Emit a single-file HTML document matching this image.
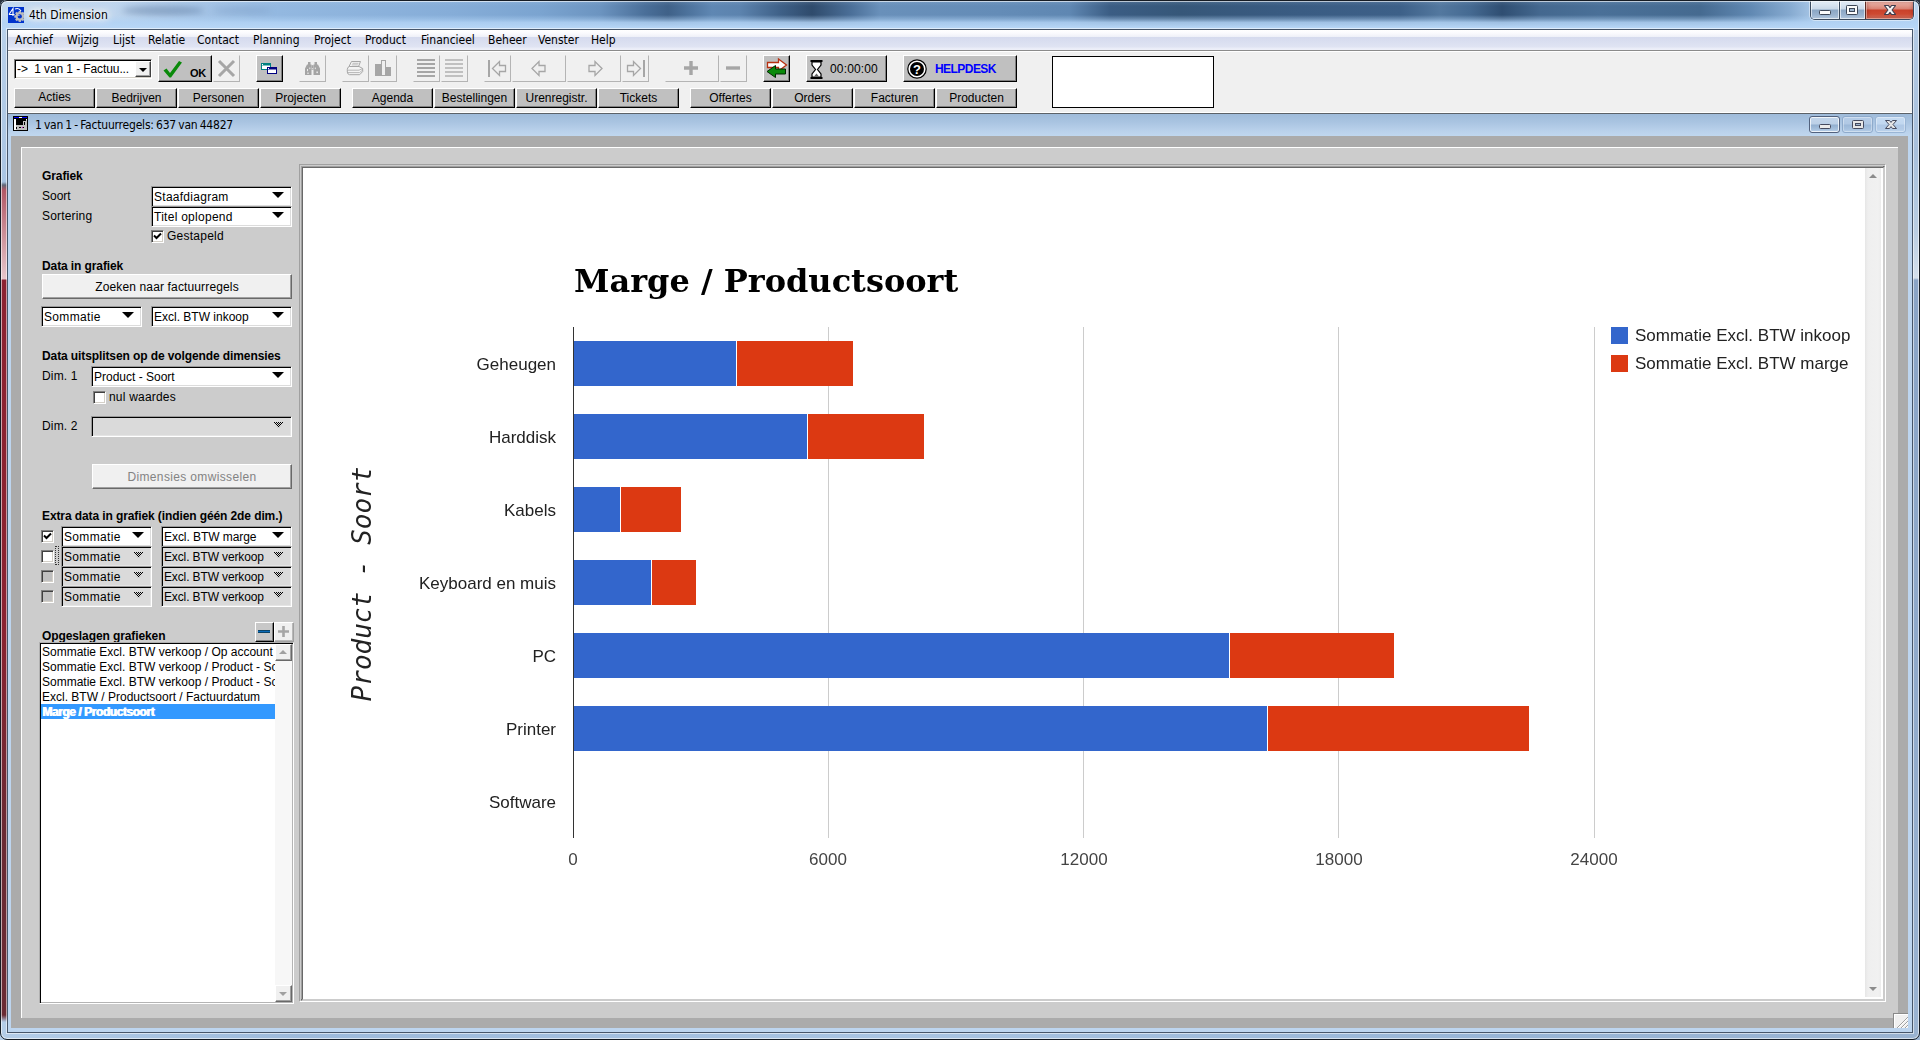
<!DOCTYPE html>
<html lang="nl">
<head>
<meta charset="utf-8">
<title>4th Dimension</title>
<style>
*{box-sizing:border-box;margin:0;padding:0}
html,body{width:1920px;height:1040px;overflow:hidden;background:#2b3440;}
body{position:relative;font-family:"Liberation Sans",sans-serif;font-size:12px;color:#000;line-height:14px;}
.a{position:absolute;white-space:nowrap}
.b{font-weight:bold;letter-spacing:-0.1px}
svg{position:absolute;overflow:visible}
/* ---------- outer aero frame ---------- */
#frame{position:absolute;left:0;top:0;width:1920px;height:1040px;border-radius:7px 7px 7px 7px;overflow:hidden;
  background:#b4cde9;}
#titlebar{position:absolute;left:0;top:0;width:1920px;height:30px;overflow:hidden;
  background:linear-gradient(90deg,#c4d9ee 0,#c0d6ee 110px,#a5c4e6 200px,#93b8e0 280px,#86add8 450px,#7ba4d0 540px,#6c94c0 600px,#4a6f99 645px,#3f6188 668px,#4e749e 690px,#5f87b3 712px,#5c83ae 740px,#3f6188 780px,#2f4b6c 812px,#4a6e97 850px,#6990ba 880px,#648cb7 1000px,#5f87b2 1070px,#3b5d84 1110px,#365779 1180px,#3a5c83 1300px,#3d6088 1400px,#53789f 1440px,#456a92 1470px,#2f4e72 1502px,#44688f 1540px,#4a7098 1600px,#456a90 1700px,#6088b2 1750px,#86aad0 1790px,#a9c8e8 1815px,#b9d3ee 1920px);}
#titlebar .shade{position:absolute;left:0;top:0;width:1920px;height:30px;
  background:linear-gradient(180deg,rgba(200,222,245,.25) 0px,rgba(200,222,245,.08) 3px,rgba(190,215,240,0) 6px,rgba(176,210,244,0) 15px,rgba(176,210,244,.4) 19px,rgba(178,211,245,.85) 22.500px,rgba(183,214,246,1) 28px);}
.blob{position:absolute;filter:blur(3px);border-radius:50%}
.seg{font-family:"DejaVu Sans Condensed","DejaVu Sans","Liberation Sans",sans-serif;font-size:12px;line-height:15px}
#ttext{left:29px;top:8px;text-shadow:0 0 5px #fff,0 0 8px #fff,0 0 12px #fff,0 0 12px #fff;}
#client{position:absolute;left:8px;top:30px;width:1904px;height:1002px;background:#f0f0f0;}
/* ---------- menu ---------- */
#menubar{position:absolute;left:8px;top:30px;width:1904px;height:21px;
  background:linear-gradient(180deg,#ffffff 0px,#fbfbfe 3px,#eef0f8 7px,#d6dbee 7.500px,#dadff0 12px,#e0e4f3 17px,#e9ecf7 18px,#eef0f9 20px);border-bottom:1px solid #8b8b8b;}
/* ---------- classic buttons ---------- */
.btn{position:absolute;background:#c0c0c0;border:1px solid;border-color:#fff #000 #000 #fff;box-shadow:inset -1px -1px 0 #808080;text-align:center;white-space:nowrap}
.dbtn{position:absolute;background:#f0f0f0;border:1px solid;border-color:#f0f0f0 #b4b4b4 #b4b4b4 #f0f0f0;}
.nav{height:20px;top:88px;width:81px;line-height:19px}
/* sunken combo */
.cb{position:absolute;background:#fff;border:1px solid;border-color:#999 #fff #fff #999;box-shadow:inset 1px 1px 0 #000,inset -1px -1px 0 #dcdcdc;height:21px;padding:3px 0 0 2px;white-space:nowrap;overflow:hidden}
.cb:after{content:"";position:absolute;right:7px;top:5px;border:6px solid transparent;border-top:6px solid #000;border-bottom:0;}
.cb.dis{background:#dadada;box-shadow:inset 1px 1px 0 #000,inset -1px -1px 0 #e4e4e4;}
.cb.dis:after{right:7px;top:5px;border:0;width:11px;height:6px;background-image:repeating-conic-gradient(#000 0 25%,transparent 0 50%);background-size:2px 2px;clip-path:polygon(0 0,100% 0,50% 100%);}
.chk{position:absolute;width:13px;height:13px;background:#fff;border:1px solid;border-color:#808080 #fff #fff #808080;box-shadow:inset 1px 1px 0 #404040,inset -1px -1px 0 #d4d0c8;}
.chk.dis{background:#c0c0c0}
</style>
</head>
<body>
<div id="frame">
  <div id="titlebar"><div class="blob" style="left:122px;top:6px;width:82px;height:9px;background:rgba(70,100,140,.38)"></div><div class="blob" style="left:212px;top:7px;width:60px;height:7px;background:rgba(90,125,170,.22)"></div><div class="shade"></div></div>
</div>
<div class="a seg" id="ttext">4th Dimension</div>
<svg style="left:8px;top:7px;overflow:hidden" width="16" height="16" viewBox="0 0 16 16"><rect width="16" height="16" fill="#0033cc"/><path d="M1 7.500L5 1.500V9M1 7.500H6.500" stroke="#fff" stroke-width="1.100" fill="none"/><path d="M7 2q4-1.500 6 2" stroke="#fff" stroke-width="1.100" fill="none"/><g transform="translate(11.800,9.400)"><g fill="#bcbcbc"><circle r="4.300"/><rect x="-1.200" y="-5.500" width="2.400" height="11"/><rect x="-1.200" y="-5.500" width="2.400" height="11" transform="rotate(45)"/><rect x="-1.200" y="-5.500" width="2.400" height="11" transform="rotate(90)"/><rect x="-1.200" y="-5.500" width="2.400" height="11" transform="rotate(135)"/></g><circle r="2.100" fill="#0033cc"/><circle cx="-0.900" cy="-0.900" r="0.600" fill="#e8eeff"/></g></svg>
<!-- caption buttons -->
<div class="a" style="left:1810px;top:0;width:104px;height:20px;border:1px solid #3a4a5e;border-top:0;border-radius:0 0 5px 5px;overflow:hidden;box-shadow:0 0 0 1px rgba(255,255,255,.45)">
 <div class="a" style="left:0;top:0;width:28px;height:19px;background:linear-gradient(180deg,#d3e0ee 0,#dfe9f4 3px,#c9d8e8 9px,#8ba6c4 10px,#9ab3cf 15px,#b4c8de 19px);box-shadow:inset 0 0 0 1px rgba(255,255,255,.6)"></div>
 <div class="a" style="left:28px;top:0;width:1px;height:19px;background:#3a4a5e"></div>
 <div class="a" style="left:29px;top:0;width:25px;height:19px;background:linear-gradient(180deg,#d3e0ee 0,#dfe9f4 3px,#c9d8e8 9px,#8ba6c4 10px,#9ab3cf 15px,#b4c8de 19px);box-shadow:inset 0 0 0 1px rgba(255,255,255,.6)"></div>
 <div class="a" style="left:54px;top:0;width:1px;height:19px;background:#5a2a24"></div>
 <div class="a" style="left:55px;top:0;width:48px;height:19px;background:linear-gradient(180deg,#e6a79b 0,#e9b0a5 3px,#d98273 9px,#c9412a 10px,#cf4a32 14px,#de7d69 19px);box-shadow:inset 0 0 0 1px rgba(255,220,210,.5),inset 0 0 4px 1px rgba(110,20,10,.45)"></div>
</div>
<svg style="left:1819px;top:10px" width="12" height="5" viewBox="0 0 12 5"><rect x="0.500" y="0.500" width="11" height="4" rx="0.800" fill="#fbfbfb" stroke="#3c4656"/></svg>
<svg style="left:1846px;top:5px" width="12" height="10" viewBox="0 0 12 10"><rect x="0.500" y="0.500" width="11" height="9" rx="0.800" fill="#fbfbfb" stroke="#3c4656"/><rect x="3.500" y="3.500" width="5" height="3" fill="#9fb6cf" stroke="#3c4656"/></svg>
<svg style="left:1884px;top:5px" width="12" height="10" viewBox="0 0 12 9" preserveAspectRatio="none"><path d="M0.500 0.500h4L6 2.400 7.500 0.500h4L8 4.500l3.500 4h-4L6 6.600 4.500 8.500h-4L4 4.500z" fill="#f6f6f6" stroke="#3c3c4c" stroke-width="1" stroke-linejoin="round"/></svg>
<div id="client"></div>
<div id="menubar"></div>
<!-- menu items -->
<div class="a seg" style="left:15px;top:33px">Archief</div>
<div class="a seg" style="left:67px;top:33px">Wijzig</div>
<div class="a seg" style="left:113px;top:33px">Lijst</div>
<div class="a seg" style="left:148px;top:33px">Relatie</div>
<div class="a seg" style="left:197px;top:33px">Contact</div>
<div class="a seg" style="left:253px;top:33px">Planning</div>
<div class="a seg" style="left:314px;top:33px">Project</div>
<div class="a seg" style="left:365px;top:33px">Product</div>
<div class="a seg" style="left:421px;top:33px">Financieel</div>
<div class="a seg" style="left:488px;top:33px">Beheer</div>
<div class="a seg" style="left:538px;top:33px">Venster</div>
<div class="a seg" style="left:591px;top:33px">Help</div>

<!-- toolbar row 1 -->
<div class="a" style="left:8px;top:51px;width:1904px;height:1px;background:#fff"></div>
<div class="a" style="left:14px;top:59px;width:138px;height:20px;background:#fff;border:1px solid;border-color:#808080 #fff #fff #808080;box-shadow:inset 1px 1px 0 #000,inset -1px -1px 0 #d4d0c8;padding:2px 0 0 2px;font-size:12px;letter-spacing:-0.1px;overflow:hidden">-&gt;&nbsp; 1 van 1 - Factuu...</div>
<div class="a" style="left:135px;top:61px;width:16px;height:16px;background:#f0f0f0;border:1px solid;border-color:#fff #404040 #404040 #fff;box-shadow:inset -1px -1px 0 #a0a0a0"></div>
<div class="a" style="left:139px;top:68px;border:4px solid transparent;border-top:4px solid #000;border-bottom:0"></div>

<div class="btn" style="left:158px;top:55px;width:54px;height:27px"></div>
<svg style="left:162px;top:59px" width="24" height="20" viewBox="0 0 24 20"><path d="M1.5 11.5 L4.5 9.5 L8 14 L17 2 L20 3.5 L9 18.5 L7.5 18.5 Z" fill="#0a8a0a"/></svg>
<div class="a b" style="left:190px;top:66px;font-size:11px;letter-spacing:-0.3px">OK</div>

<div class="dbtn" style="left:213px;top:55px;width:27px;height:27px"></div>
<svg style="left:217px;top:59px" width="19" height="19" viewBox="0 0 19 19"><path d="M2 2 L17 17 M17 2 L2 17" stroke="#a6a6a6" stroke-width="3" fill="none"/></svg>

<div class="btn" style="left:256px;top:55px;width:27px;height:27px"></div>
<svg style="left:261px;top:63px" width="17" height="12" viewBox="0 0 17 12"><rect x="0.5" y="0.5" width="9" height="6" fill="#fff" stroke="#008080"/><rect x="0" y="0" width="10" height="2.5" fill="#008080"/><rect x="1" y="1" width="1" height="1" fill="#fff"/><rect x="6.5" y="4.5" width="9" height="6" fill="#fff" stroke="#000080"/><rect x="6" y="4" width="10" height="2.5" fill="#000080"/><rect x="7" y="5" width="1" height="1" fill="#fff"/></svg>

<div class="dbtn" style="left:299px;top:55px;width:27px;height:27px"></div>
<svg style="left:305px;top:62px" width="15" height="13" viewBox="0 0 15 13"><path d="M3 0h2.500v2.500h1V13H0V6.500L2 2.500h1zM9.500 0H12v2.500h1l2 4V13H8.500V2.500h1z" fill="#a4a4a4"/><rect x="6.500" y="3.200" width="2" height="4.800" fill="#a4a4a4"/><g fill="#ececec"><rect x="2" y="7" width="1" height="2.200"/><rect x="4.300" y="5.500" width="1" height="1.600"/><rect x="2.200" y="10.600" width="1.600" height="1.200"/><rect x="9.800" y="5.500" width="1" height="1.600"/><rect x="11.400" y="9.500" width="1.500" height="1.600"/><rect x="6.900" y="6.300" width="1.200" height="1"/></g></svg>

<div class="dbtn" style="left:342px;top:55px;width:27px;height:27px"></div>
<svg style="left:346px;top:60px" width="18" height="16" viewBox="0 0 18 16"><path d="M5.500 1.500h9l-2 5h-9.500z" fill="#f4f4f4" stroke="#a6a6a6" stroke-width="1"/><path d="M6.500 3.300h6M5.800 4.900h6" stroke="#b0b0b0" stroke-width="0.800"/><path d="M1.300 9.500Q1.300 7 3.500 6.500h9.500l3.700 2v3l-3 3.200H3.500Q1.300 14.200 1.300 12z" fill="#f4f4f4" stroke="#a6a6a6" stroke-width="1"/><path d="M1.500 10.200h11.500l3.500-1.600M2 12.600h11.500l3-2.400" stroke="#a6a6a6" stroke-width="0.800" fill="none"/></svg>
<div class="dbtn" style="left:370px;top:55px;width:27px;height:27px"></div>
<svg style="left:375px;top:60px" width="17" height="17" viewBox="0 0 17 17"><rect x="0" y="4" width="6" height="12" fill="#a6a6a6"/><rect x="6.5" y="0.5" width="4" height="15" fill="#f0f0f0" stroke="#a6a6a6"/><rect x="11" y="7" width="5" height="9" fill="#a6a6a6"/></svg>

<div class="dbtn" style="left:413px;top:55px;width:27px;height:27px"></div>
<svg style="left:417px;top:59px" width="19" height="19" viewBox="0 0 19 19"><path d="M0 1h18M0 5h18M0 9h18M0 13h18M0 17h18" stroke="#a6a6a6" stroke-width="2"/></svg>
<div class="dbtn" style="left:441px;top:55px;width:27px;height:27px"></div>
<svg style="left:445px;top:59px" width="19" height="19" viewBox="0 0 19 19"><path d="M0 1h18M0 5h18M0 9h18M0 13h18M0 17h18" stroke="#b0b0b0" stroke-width="1.4"/></svg>

<div class="dbtn" style="left:484px;top:55px;width:27px;height:27px"></div>
<svg style="left:488px;top:60px" width="19" height="17" viewBox="0 0 19 17"><path d="M1 0v17" stroke="#a6a6a6" stroke-width="2"/><path d="M4.500 8.500l7-7v4h6v6h-6v4z" fill="none" stroke="#a6a6a6" stroke-width="1.3"/></svg>
<div class="dbtn" style="left:512px;top:55px;width:54px;height:27px"></div>
<svg style="left:531px;top:60px" width="16" height="17" viewBox="0 0 16 17"><path d="M1 8.500l7-7v4h6v6h-6v4z" fill="none" stroke="#a6a6a6" stroke-width="1.3"/></svg>
<div class="dbtn" style="left:567px;top:55px;width:54px;height:27px"></div>
<svg style="left:587px;top:60px" width="16" height="17" viewBox="0 0 16 17"><path d="M15 8.500l-7-7v4h-6v6h6v4z" fill="none" stroke="#a6a6a6" stroke-width="1.3"/></svg>
<div class="dbtn" style="left:622px;top:55px;width:27px;height:27px"></div>
<svg style="left:626px;top:60px" width="19" height="17" viewBox="0 0 19 17"><path d="M18 0v17" stroke="#a6a6a6" stroke-width="2"/><path d="M14.500 8.500l-7-7v4h-6v6h6v4z" fill="none" stroke="#a6a6a6" stroke-width="1.3"/></svg>

<div class="dbtn" style="left:665px;top:55px;width:54px;height:27px"></div>
<svg style="left:684px;top:61px" width="14" height="14" viewBox="0 0 14 14"><path d="M7 0v14M0 7h14" stroke="#a6a6a6" stroke-width="3.4"/></svg>
<div class="dbtn" style="left:720px;top:55px;width:27px;height:27px"></div>
<svg style="left:726px;top:61px" width="14" height="14" viewBox="0 0 14 14"><path d="M0 7h14" stroke="#a6a6a6" stroke-width="3.4"/></svg>

<div class="btn" style="left:763px;top:55px;width:27px;height:27px"></div>
<svg style="left:766px;top:58px" width="21" height="21" viewBox="0 0 21 21"><path d="M1.500 4.500h11v-3.500l8 6-8 6v-3.500h-11z" fill="#fff" stroke="#b83010" stroke-width="1.300"/><path d="M19.500 11h-10v-3.500l-8.500 6 8.500 6v-3.500h10z" fill="#0a8a0a" stroke="#002800" stroke-width="1"/></svg>

<div class="btn" style="left:806px;top:55px;width:81px;height:27px"></div>
<svg style="left:810px;top:60px" width="13" height="19" viewBox="0 0 13 19"><path d="M0.500 1h12M0.500 18h12" stroke="#000" stroke-width="2"/><path d="M2 2h9v3l-3.500 4.500 3.500 4.500v3h-9v-3l3.500-4.500-3.500-4.500z" fill="#fff" stroke="#000" stroke-width="1.2"/><path d="M4 16.500l2.500-3 2.500 3z" fill="#666"/></svg>
<div class="a" style="left:830px;top:62px;letter-spacing:0.15px">00:00:00</div>

<div class="btn" style="left:903px;top:55px;width:114px;height:27px"></div>
<svg style="left:907px;top:59px" width="20" height="20" viewBox="0 0 20 20"><circle cx="10" cy="10" r="9.200" fill="#fff" stroke="#000" stroke-width="1.2"/><circle cx="10" cy="10" r="7" fill="#000"/><text x="10" y="14.500" text-anchor="middle" font-family="Liberation Sans,sans-serif" font-weight="bold" font-size="13" fill="#fff">?</text></svg>
<div class="a b" style="left:935px;top:62px;color:#0000ff;font-size:12px;letter-spacing:-0.55px;word-spacing:0">HELPDESK</div>

<div class="a" style="left:1052px;top:56px;width:162px;height:52px;background:#fff;border:1px solid #000"></div>

<!-- toolbar row 2 -->
<div class="btn nav" style="left:14px;line-height:17px">Acties</div>
<div class="btn nav" style="left:96px">Bedrijven</div>
<div class="btn nav" style="left:178px">Personen</div>
<div class="btn nav" style="left:260px">Projecten</div>
<div class="btn nav" style="left:352px">Agenda</div>
<div class="btn nav" style="left:434px">Bestellingen</div>
<div class="btn nav" style="left:516px">Urenregistr.</div>
<div class="btn nav" style="left:598px">Tickets</div>
<div class="btn nav" style="left:690px">Offertes</div>
<div class="btn nav" style="left:772px">Orders</div>
<div class="btn nav" style="left:854px">Facturen</div>
<div class="btn nav" style="left:936px">Producten</div>
<!-- child window -->
<div class="a" style="left:8px;top:112px;width:1904px;height:1px;background:#fff"></div>
<div class="a" style="left:8px;top:113px;width:1904px;height:919px;background:#bdd5ef;border-top:1px solid #5c6268"></div>
<div class="a" id="ctitle" style="left:8px;top:114px;width:1904px;height:22px;background:linear-gradient(180deg,#9fbbda 0px,#a9c4e1 8px,#b8d0ea 16px,#c0d7ef 22px)"></div>
<svg style="left:13px;top:116px" width="15" height="15" viewBox="0 0 15 15" shape-rendering="crispEdges"><rect width="15" height="15" fill="#000"/><rect x="1" y="1" width="13" height="1" fill="#0000ff"/><rect x="6" y="1" width="3" height="1" fill="#fff"/><rect x="1" y="3" width="2" height="11" fill="#fff"/><rect x="3" y="9" width="11" height="5" fill="#c0c0c0"/><rect x="10" y="5" width="4" height="4" fill="#c0c0c0"/><rect x="13" y="3" width="1" height="2" fill="#c0c0c0"/><rect x="13" y="3" width="1" height="1" fill="#fff"/><rect x="11" y="6" width="1" height="3" fill="#000"/><rect x="6" y="11" width="2" height="1" fill="#000"/><rect x="9" y="11" width="1" height="1" fill="#c000c0"/><rect x="10" y="11" width="1" height="1" fill="#000"/><rect x="3" y="11" width="1" height="2" fill="#000"/></svg>
<div class="a seg" style="left:35px;top:118px;letter-spacing:-0.2px;word-spacing:-1px">1 van 1 - Factuurregels: 637 van 44827</div>

<!-- child caption buttons -->
<div class="a" style="left:1809px;top:116px;width:31px;height:17px;border:1px solid #52627e;border-radius:3px;background:linear-gradient(180deg,#c3d6eb 0,#bcd0e7 7px,#93b0d0 8px,#a4bfdc 12px,#b9d0ea 15px);box-shadow:inset 0 0 0 1px rgba(255,255,255,.75)"></div>
<div class="a" style="left:1842px;top:116px;width:31px;height:17px;border:1px solid #8eaacb;border-radius:3px;background:linear-gradient(180deg,#b6cde8 0,#b0c8e4 7px,#9cb8d8 8px,#a6c1df 12px,#b6cee9 15px);box-shadow:inset 0 0 0 1px rgba(255,255,255,.35)"></div>
<div class="a" style="left:1875px;top:116px;width:31px;height:17px;border:1px solid #9ab6d6;border-radius:3px;background:linear-gradient(180deg,#c6dbf2 0,#c2d8f0 7px,#b0c9e6 8px,#b3cbe7 12px,#bed5ee 15px);box-shadow:inset 0 0 0 1px rgba(255,255,255,.35)"></div>
<svg style="left:1819px;top:124px" width="12" height="5" viewBox="0 0 12 5"><rect x="0.500" y="0.500" width="11" height="4" rx="1" fill="#ebebeb" stroke="#454a5e"/></svg>
<svg style="left:1852px;top:120px" width="12" height="9" viewBox="0 0 12 9"><rect x="0.500" y="0.500" width="11" height="8" rx="1" fill="#e6e6e6" stroke="#454a5e"/><rect x="3.500" y="3.500" width="5" height="2" fill="#9fb6cf" stroke="#454a5e"/></svg>
<svg style="left:1885px;top:120px" width="12" height="9" viewBox="0 0 12 9"><path d="M0.500 0.500h4L6 2.400 7.500 0.500h4L8 4.500l3.500 4h-4L6 6.600 4.500 8.500h-4L4 4.500z" fill="#e6e6e6" stroke="#454a5e" stroke-width="1" stroke-linejoin="round"/></svg>

<div class="a" style="left:11px;top:136px;width:1897px;height:892px;background:#ababab"></div>
<div class="a" style="left:21px;top:147px;width:1877px;height:871px;background:#cccccc;border-left:1px solid #fff;border-top:1px solid #fff"></div>
<!-- size grip -->
<div class="a" style="left:1893px;top:1013px;width:15px;height:15px;background:#f0f0f0;border-left:1px solid #8a8a8a;border-top:1px solid #8a8a8a;box-shadow:inset 1px 1px 0 #fff;overflow:hidden">
<svg style="left:0;top:0" width="14" height="14" viewBox="0 0 14 14"><path d="M3 14L14 3M7 14L14 7M11 14l3-3" stroke="#a0a0a0" stroke-width="1"/><path d="M4 14L14 4M8 14L14 8M12 14l2-2" stroke="#fff" stroke-width="1"/></svg></div>

<!-- left panel -->
<div class="a b" style="left:42px;top:169px">Grafiek</div>
<div class="a" style="left:42px;top:189px">Soort</div>
<div class="cb" style="left:151px;top:186px;width:141px;letter-spacing:0.27px">Staafdiagram</div>
<div class="a" style="left:42px;top:209px;letter-spacing:0.18px">Sortering</div>
<div class="cb" style="left:151px;top:206px;width:141px;letter-spacing:0.27px">Titel oplopend</div>
<div class="chk" style="left:151px;top:230px"></div>
<svg style="left:153px;top:232px" width="9" height="9" viewBox="0 0 9 9"><path d="M1 3.500l2.500 2.500 4.500-4.500" stroke="#000" stroke-width="2" fill="none"/></svg>
<div class="a" style="left:167px;top:229px;letter-spacing:0.25px">Gestapeld</div>

<div class="a b" style="left:42px;top:259px">Data in grafiek</div>
<div class="a" style="left:42px;top:274px;width:250px;height:25px;background:#f0f0f0;border:1px solid;border-color:#fff #696969 #696969 #fff;text-align:center;line-height:25px;box-shadow:inset -1px -1px 0 #a0a0a0;letter-spacing:0.14px">Zoeken naar factuurregels</div>
<div class="cb" style="left:41px;top:306px;width:101px;letter-spacing:0.33px">Sommatie</div>
<div class="cb" style="left:151px;top:306px;width:141px">Excl. BTW inkoop</div>

<div class="a b" style="left:42px;top:349px">Data uitsplitsen op de volgende dimensies</div>
<div class="a" style="left:42px;top:369px;letter-spacing:0.15px">Dim. 1</div>
<div class="cb" style="left:91px;top:366px;width:201px">Product - Soort</div>
<div class="chk" style="left:93px;top:391px"></div>
<div class="a" style="left:109px;top:390px;letter-spacing:0.2px">nul waardes</div>
<div class="a" style="left:42px;top:419px;letter-spacing:0.15px">Dim. 2</div>
<div class="cb dis" style="left:91px;top:416px;width:201px"></div>
<div class="a" style="left:92px;top:464px;width:200px;height:25px;background:#f0f0f0;border:1px solid;border-color:#fff #696969 #696969 #fff;text-align:center;line-height:24px;color:#838383;box-shadow:inset -1px -1px 0 #a0a0a0;letter-spacing:0.35px">Dimensies omwisselen</div>

<div class="a b" style="left:42px;top:509px">Extra data in grafiek (indien géén 2de dim.)</div>
<div class="chk" style="left:41px;top:530px"></div>
<svg style="left:43px;top:532px" width="9" height="9" viewBox="0 0 9 9"><path d="M1 3.500l2.500 2.500 4.500-4.500" stroke="#000" stroke-width="2" fill="none"/></svg>
<div class="cb" style="left:61px;top:526px;width:91px;letter-spacing:0.33px">Sommatie</div>
<div class="cb" style="left:161px;top:526px;width:131px;letter-spacing:-0.06px">Excl. BTW marge</div>
<div class="chk" style="left:41px;top:550px"></div>
<div class="a" style="left:55px;top:546px;width:4px;height:19px;border:1px dotted #333"></div>
<div class="cb dis" style="left:61px;top:546px;width:91px;letter-spacing:0.33px">Sommatie</div>
<div class="cb dis" style="left:161px;top:546px;width:131px;letter-spacing:-0.13px">Excl. BTW verkoop</div>
<div class="chk dis" style="left:41px;top:570px"></div>
<div class="cb dis" style="left:61px;top:566px;width:91px;letter-spacing:0.33px">Sommatie</div>
<div class="cb dis" style="left:161px;top:566px;width:131px;letter-spacing:-0.13px">Excl. BTW verkoop</div>
<div class="chk dis" style="left:41px;top:590px"></div>
<div class="cb dis" style="left:61px;top:586px;width:91px;letter-spacing:0.33px">Sommatie</div>
<div class="cb dis" style="left:161px;top:586px;width:131px;letter-spacing:-0.13px">Excl. BTW verkoop</div>

<div class="a b" style="left:42px;top:629px">Opgeslagen grafieken</div>
<div class="a" style="left:255px;top:622px;width:19px;height:20px;background:#c8c8c8;border:1px solid;border-color:#fff #000 #000 #fff;box-shadow:inset -1px -1px 0 #808080"></div>
<div class="a" style="left:258px;top:630px;width:12px;height:3px;background:#0a6ab8;border:1px solid #0c4468;border-left:0;border-right:0"></div>
<div class="a" style="left:274px;top:622px;width:20px;height:20px;background:#f0f0f0;border:1px solid;border-color:#fff #a0a0a0 #a0a0a0 #fff;box-shadow:inset -1px -1px 0 #b8b8b8"></div>
<svg style="left:278px;top:626px" width="11" height="11" viewBox="0 0 11 11"><path d="M5.500 0v11M0 5.500h11" stroke="#a6a6a6" stroke-width="2.600"/></svg>

<div class="a" style="left:39px;top:642px;width:255px;height:362px;background:#fff;border:1px solid;border-color:#b0b0b0 #fff #fff #b0b0b0;box-shadow:inset 1px 1px 0 #000,inset -1px -1px 0 #b4b4b4"></div>
<div class="a" style="left:275px;top:644px;width:17px;height:358px;background:#f7f7f7"></div>
<div class="a lst" style="left:42px;top:645px;width:233px;overflow:hidden">Sommatie Excl. BTW verkoop / Op account</div>
<div class="a lst" style="left:42px;top:660px;width:233px;overflow:hidden">Sommatie Excl. BTW verkoop / Product - Soort</div>
<div class="a lst" style="left:42px;top:675px;width:233px;overflow:hidden">Sommatie Excl. BTW verkoop / Product - Soort</div>
<div class="a lst" style="left:42px;top:690px;width:233px;overflow:hidden">Excl. BTW / Productsoort / Factuurdatum</div>
<div class="a" style="left:41px;top:704px;width:234px;height:15px;background:#3399ff"></div>
<div class="a b" style="left:42px;top:705px;color:#fff;letter-spacing:-0.45px;text-shadow:1px 0 0 #fff">Marge / Productsoort</div>
<!-- listbox scroll buttons -->
<div class="a" style="left:275px;top:644px;width:17px;height:17px;background:#f0f0f0;border:1px solid;border-color:#fff #696969 #696969 #fff;box-shadow:inset -1px -1px 0 #a0a0a0"></div>
<div class="a" style="left:279px;top:650px;border:4px solid transparent;border-bottom:4px solid #a0a0a0;border-top:0"></div>
<div class="a" style="left:275px;top:985px;width:17px;height:17px;background:#f0f0f0;border:1px solid;border-color:#fff #696969 #696969 #fff;box-shadow:inset -1px -1px 0 #a0a0a0"></div>
<div class="a" style="left:279px;top:992px;border:4px solid transparent;border-top:4px solid #a0a0a0;border-bottom:0"></div>
<!-- chart box -->
<div class="a" style="left:299px;top:164px;width:1587px;height:838px;border:1px solid;border-color:#a0a0a0 #fff #fff #a0a0a0"></div>
<div class="a" style="left:301px;top:166px;width:1584px;height:835px;background:#fff;border:2px solid;border-color:#696969 #ccc #ccc #696969;box-shadow:inset 0 0 0 0 #000"></div>
<div class="a" style="left:301px;top:166px;width:1582px;height:1px;background:#a0a0a0"></div>
<div class="a" style="left:301px;top:166px;width:1px;height:833px;background:#a0a0a0"></div>
<!-- chart scrollbar -->
<div class="a" style="left:1865px;top:168px;width:16px;height:829px;background:linear-gradient(90deg,#e6e6e6 0,#efefef 3px,#f1f1f1 13px,#ececec 16px)"></div>
<div class="a" style="left:1869px;top:174px;border:4px solid transparent;border-bottom:4px solid #8c8c8c;border-top:0"></div>
<div class="a" style="left:1869px;top:987px;border:4px solid transparent;border-top:4px solid #8c8c8c;border-bottom:0"></div>

<svg style="left:303px;top:168px;will-change:transform" width="1562" height="831" viewBox="303 168 1562 831">
 <g shape-rendering="crispEdges">
  <rect x="828" y="327" width="1" height="511" fill="#cccccc"/>
  <rect x="1083" y="327" width="1" height="511" fill="#cccccc"/>
  <rect x="1338" y="327" width="1" height="511" fill="#cccccc"/>
  <rect x="1594" y="327" width="1" height="511" fill="#cccccc"/>
  <g fill="#3366cc">
   <rect x="574" y="341" width="162" height="45"/>
   <rect x="574" y="414" width="233" height="45"/>
   <rect x="574" y="487" width="46" height="45"/>
   <rect x="574" y="560" width="77" height="45"/>
   <rect x="574" y="633" width="655" height="45"/>
   <rect x="574" y="706" width="693" height="45"/>
   <rect x="1611" y="327" width="17" height="17"/>
  </g>
  <g fill="#dc3912">
   <rect x="737" y="341" width="116" height="45"/>
   <rect x="808" y="414" width="116" height="45"/>
   <rect x="621" y="487" width="60" height="45"/>
   <rect x="652" y="560" width="44" height="45"/>
   <rect x="1230" y="633" width="164" height="45"/>
   <rect x="1268" y="706" width="261" height="45"/>
   <rect x="1611" y="355" width="17" height="17"/>
  </g>
  <rect x="573" y="327" width="1" height="511" fill="#333333"/>
 </g>
 <text x="574" y="292" font-family="DejaVu Serif,Liberation Serif,serif" font-weight="bold" font-size="32" fill="#000">Marge / Productsoort</text>
 <text transform="translate(371,584) rotate(-90)" text-anchor="middle" font-family="DejaVu Sans Mono,Liberation Mono,monospace" font-style="italic" font-size="26" fill="#222">Product - Soort</text>
 <g font-family="Liberation Sans,sans-serif" font-size="17" fill="#222" text-anchor="end">
  <text x="556" y="370">Geheugen</text>
  <text x="556" y="443">Harddisk</text>
  <text x="556" y="516">Kabels</text>
  <text x="556" y="589">Keyboard en muis</text>
  <text x="556" y="662">PC</text>
  <text x="556" y="735">Printer</text>
  <text x="556" y="808">Software</text>
 </g>
 <g font-family="Liberation Sans,sans-serif" font-size="17" fill="#222">
  <text x="1635" y="341">Sommatie Excl. BTW inkoop</text>
  <text x="1635" y="369">Sommatie Excl. BTW marge</text>
 </g>
 <g font-family="Liberation Sans,sans-serif" font-size="17" fill="#444" text-anchor="middle">
  <text x="573" y="864.500">0</text>
  <text x="828" y="864.500">6000</text>
  <text x="1084" y="864.500">12000</text>
  <text x="1339" y="864.500">18000</text>
  <text x="1594" y="864.500">24000</text>
 </g>
</svg>

<!-- outer frame edges -->
<div class="a" id="edgeL" style="left:0;top:30px;width:8px;height:1002px;background:linear-gradient(180deg,#b9d0ea 0,#a9c4e2 150px,#a5c0de 152px,#606878 155px,#b25866 160px,#c98a94 200px,#e6c6cb 249px,#8c2232 250px,#8a2231 600px,#6a2a34 800px,#6a2a34 985px,#b4cde8 992px,#b4cde8 1002px)"></div>
<div class="a" id="edgeR" style="left:1912px;top:30px;width:8px;height:1002px;background:linear-gradient(180deg,#b3cae4 0,#a8c0dc 120px,#b9cde2 200px,#d5e0ec 248px,#8aa4c6 250px,#8fa9ca 600px,#9ab3d1 1002px)"></div>
<div class="a" id="edgeB" style="left:0;top:1032px;width:1920px;height:8px;background:linear-gradient(90deg,#b4cde8 0,#9dbadb 300px,#a9c4e2 900px,#98b5d6 1500px,#9ab3d1 1920px)"></div>
<!-- inner dark line + highlight -->
<div class="a" style="left:7px;top:29px;width:1906px;height:1004px;border:1px solid #47566a;pointer-events:none"></div>
<div class="a" style="left:6px;top:28px;width:1908px;height:1006px;border:1px solid rgba(255,255,255,.55);pointer-events:none"></div>
<!-- outer outline -->
<div class="a" style="left:0;top:0;width:1920px;height:1040px;border:1px solid #161c24;border-radius:7px;box-shadow:inset 0 0 0 1px rgba(255,255,255,.6)"></div>
</body>
</html>
